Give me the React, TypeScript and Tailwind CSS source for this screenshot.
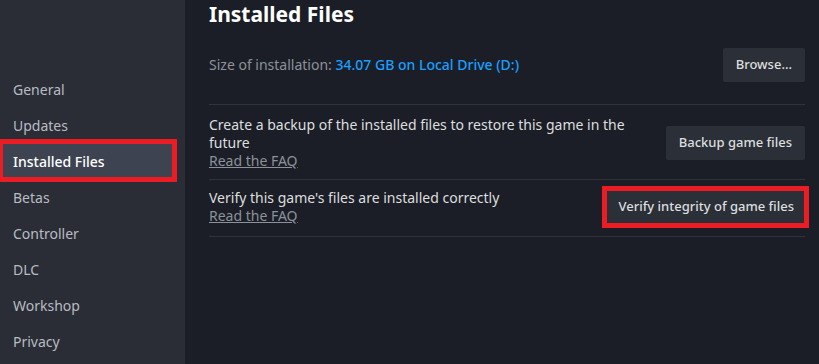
import React from 'react';

const NAV_ITEMS = ['General', 'Updates', 'Installed Files', 'Betas', 'Controller', 'DLC', 'Workshop', 'Privacy'];

const GameButton: React.FC<{ label: string; highlight?: boolean }> = ({ label, highlight }) => (
  <div className="relative shrink-0">
    <button className={`h-[34px] ${highlight ? 'px-[11px]' : 'px-[13px]'} rounded-[2px] bg-[#2b2f38] text-[13px] font-medium text-[#dcdedf]`}>{label}</button>
    {highlight && <span className="absolute -left-[5px] -top-[4px] -right-[4px] -bottom-[4px] border-[5px] border-[#ec1c24] pointer-events-none" />}
  </div>
);

const App: React.FC = () => {
  return (
    <div className="w-[819px] h-[364px] flex overflow-hidden bg-[#1b1e26] font-['Noto_Sans','Liberation_Sans',sans-serif]">
      <aside className="w-[185px] shrink-0 bg-[#2a2d36] pt-[71px]">
        {NAV_ITEMS.map(item => {
          const active = item === 'Installed Files';
          return (
            <div key={item} className="relative h-9 flex items-center">
              {active && <div className="absolute left-0 top-[1px] w-[172px] h-[34px] bg-[#3d4350]" />}
              <span className={`relative pl-[13px] text-[14px] ${active ? 'text-white font-medium' : 'text-[#b8bcc2]'}`}>{item}</span>
              {active && <span className="absolute left-0 -top-[4px] w-[177px] h-[43px] border-[#ec1c24] border-t-[5px] border-b-[5px] border-l-[3px] border-r-[5px]" />}
            </div>
          );
        })}
      </aside>

      <main className="flex-1 pl-[24px] pr-[14px]">
        <h1 className="text-[21px] leading-[28px] font-bold text-white">Installed Files</h1>

        <div className="flex items-center justify-between mt-[20px] pb-[22px] border-b border-[#2e333d]">
          <p className="text-[14px] text-[#8b929a] -mt-[2px]">
            Size of installation: <span className="text-[#1a9fff] font-medium">34.07 GB on Local Drive (D:)</span>
          </p>
          <GameButton label="Browse..." />
        </div>

        <div className="flex items-center justify-between pt-[11px] pb-[9px] border-b border-[#2e333d]">
          <div className="w-[430px] text-[14px] leading-[18px]">
            <p className="text-[#dcdedf]">Create a backup of the installed files to restore this game in the future</p>
            <a className="text-[#8b929a] underline">Read the FAQ</a>
          </div>
          <GameButton label="Backup game files" />
        </div>

        <div className="flex items-center justify-between pt-[9px] pb-[11px] border-b border-[#2e333d]">
          <div className="text-[14px] leading-[18px]">
            <p className="text-[#dcdedf]">Verify this game's files are installed correctly</p>
            <a className="text-[#8b929a] underline">Read the FAQ</a>
          </div>
          <GameButton label="Verify integrity of game files" highlight />
        </div>
      </main>
    </div>
  );
};

export default App;
